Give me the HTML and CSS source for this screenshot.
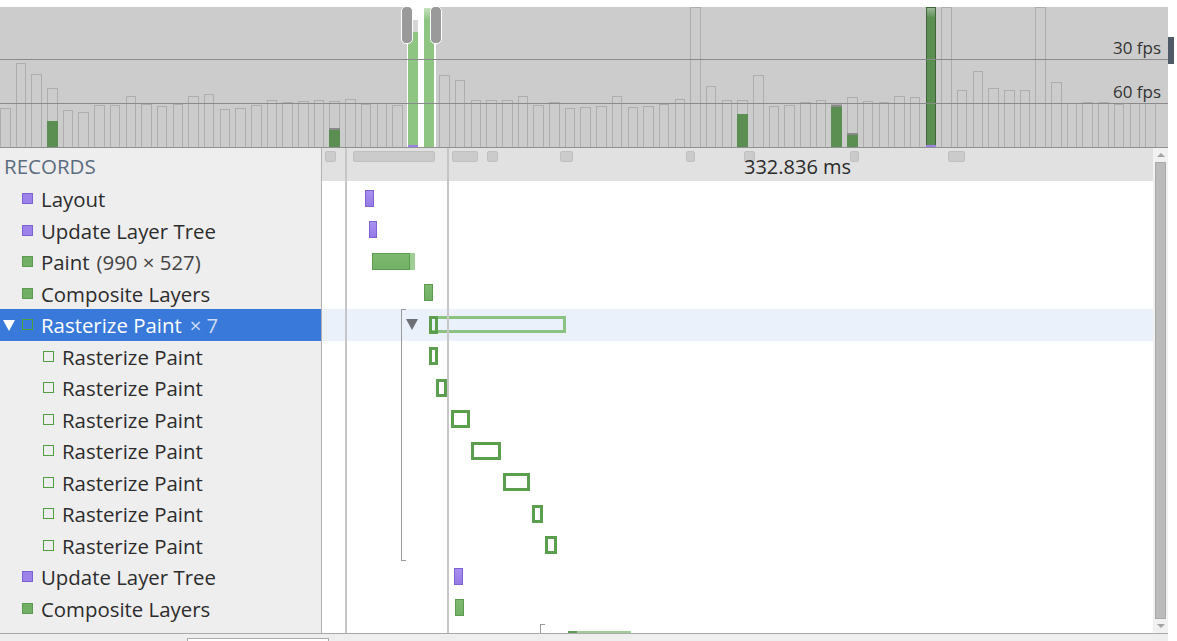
FILE: index.html
```html
<!DOCTYPE html>
<html>
<head>
<meta charset="utf-8">
<link rel="stylesheet" href="styles.css">
</head>
<body>
<div class="app">
  <section class="overview">
    <div class="window"></div>
    <div class="bars">
      <div class="bar" style="height:39px"></div>
      <div class="bar" style="height:84px"></div>
      <div class="bar" style="height:73px"></div>
      <div class="bar" style="height:59px"><div class="fill" style="height:26px"></div></div>
      <div class="bar" style="height:37px"></div>
      <div class="bar" style="height:35px"></div>
      <div class="bar" style="height:42px"></div>
      <div class="bar" style="height:42px"></div>
      <div class="bar" style="height:51px"></div>
      <div class="bar" style="height:43px"></div>
      <div class="bar" style="height:41px"></div>
      <div class="bar" style="height:43px"></div>
      <div class="bar" style="height:51px"></div>
      <div class="bar" style="height:53px"></div>
      <div class="bar" style="height:38px"></div>
      <div class="bar" style="height:39px"></div>
      <div class="bar" style="height:42px"></div>
      <div class="bar" style="height:47px"></div>
      <div class="bar" style="height:45px"></div>
      <div class="bar" style="height:46px"></div>
      <div class="bar" style="height:47px"></div>
      <div class="bar" style="height:46px"><div class="fill cap" style="height:19px"></div></div>
      <div class="bar" style="height:48px"></div>
      <div class="bar" style="height:43px"></div>
      <div class="bar" style="height:44px"></div>
      <div class="bar" style="height:42px"></div>
      <div class="bar sel" style="height:128px"><div class="lcap" style="height:12px"></div><div class="lfill" style="height:114px"></div><div class="purp"></div></div>
      <div class="bar sel" style="height:140px"><div class="lfill fade" style="height:140px"></div></div>
      <div class="bar" style="height:72px"></div>
      <div class="bar" style="height:67px"></div>
      <div class="bar" style="height:47px"></div>
      <div class="bar" style="height:47px"></div>
      <div class="bar" style="height:47px"></div>
      <div class="bar" style="height:51px"></div>
      <div class="bar" style="height:42px"></div>
      <div class="bar" style="height:45px"></div>
      <div class="bar" style="height:39px"></div>
      <div class="bar" style="height:40px"></div>
      <div class="bar" style="height:41px"></div>
      <div class="bar" style="height:51px"></div>
      <div class="bar" style="height:40px"></div>
      <div class="bar" style="height:41px"></div>
      <div class="bar" style="height:43px"></div>
      <div class="bar" style="height:48px"></div>
      <div class="bar" style="height:140px"></div>
      <div class="bar" style="height:61px"></div>
      <div class="bar" style="height:47px"></div>
      <div class="bar" style="height:47px"><div class="fill" style="height:33px"></div></div>
      <div class="bar" style="height:72px"></div>
      <div class="bar" style="height:41px"></div>
      <div class="bar" style="height:42px"></div>
      <div class="bar" style="height:45px"></div>
      <div class="bar" style="height:47px"></div>
      <div class="bar" style="height:43px"><div class="fill cap" style="height:42px"></div></div>
      <div class="bar" style="height:50px"><div class="fill cap" style="height:14px"></div></div>
      <div class="bar" style="height:46px"></div>
      <div class="bar" style="height:45px"></div>
      <div class="bar" style="height:51px"></div>
      <div class="bar" style="height:50px"></div>
      <div class="bar heavy" style="height:140px"><div class="fill fade-dark" style="height:138px"></div><div class="purp"></div></div>
      <div class="bar" style="height:140px"></div>
      <div class="bar" style="height:57px"></div>
      <div class="bar" style="height:76px"></div>
      <div class="bar" style="height:59px"></div>
      <div class="bar" style="height:57px"></div>
      <div class="bar" style="height:57px"></div>
      <div class="bar" style="height:140px"></div>
      <div class="bar" style="height:65px"></div>
      <div class="bar" style="height:44px"></div>
      <div class="bar" style="height:45px"></div>
      <div class="bar" style="height:45px"></div>
      <div class="bar" style="height:43px"></div>
      <div class="bar" style="height:44px"></div>
      <div class="bar" style="height:44px"></div>
    </div>
    <div class="fps-line l30"></div>
    <div class="fps-line l60"></div>
    <span class="fps-label t30">30 fps</span>
    <span class="fps-label t60">60 fps</span>
    <div class="handle h1"></div>
    <div class="handle h2"></div>
  </section>

  <div class="main">
    <aside class="sidebar">
      <div class="sidebar-header">RECORDS</div>
      <div class="row"><span class="icon purple"></span>Layout</div>
      <div class="row"><span class="icon purple"></span>Update Layer Tree</div>
      <div class="row"><span class="icon green"></span>Paint<span class="details">(990 × 527)</span></div>
      <div class="row"><span class="icon green"></span>Composite Layers</div>
      <div class="row selected"><span class="toggle open"></span><span class="icon hollow"></span>Rasterize Paint<span class="count">× 7</span></div>
      <div class="row child"><span class="icon hollow"></span>Rasterize Paint</div>
      <div class="row child"><span class="icon hollow"></span>Rasterize Paint</div>
      <div class="row child"><span class="icon hollow"></span>Rasterize Paint</div>
      <div class="row child"><span class="icon hollow"></span>Rasterize Paint</div>
      <div class="row child"><span class="icon hollow"></span>Rasterize Paint</div>
      <div class="row child"><span class="icon hollow"></span>Rasterize Paint</div>
      <div class="row child"><span class="icon hollow"></span>Rasterize Paint</div>
      <div class="row"><span class="icon purple"></span>Update Layer Tree</div>
      <div class="row"><span class="icon green"></span>Composite Layers</div>
      <div class="row"><span class="toggle closed"></span><span class="icon green"></span>Rasterize Paint<span class="count dim">× 8</span></div>
    </aside>

    <div class="timeline">
      <div class="dividers">
        <span class="marker" style="left:3px;width:11px"></span>
        <span class="marker" style="left:31px;width:82px"></span>
        <span class="marker" style="left:130px;width:26px"></span>
        <span class="marker" style="left:165px;width:11px"></span>
        <span class="marker" style="left:238px;width:13px"></span>
        <span class="marker" style="left:364px;width:9px"></span>
        <span class="marker" style="left:422px;width:11px"></span>
        <span class="marker" style="left:528px;width:9px"></span>
        <span class="marker" style="left:626px;width:17px"></span>
        <span class="divider-label" style="left:422px">332.836 ms</span>
      </div>
      <div class="rows">
        <div class="trow"><span class="tbar purple" style="left:43px;width:9px"></span></div>
        <div class="trow"><span class="tbar purple" style="left:47px;width:8px"></span></div>
        <div class="trow"><span class="tbar green" style="left:50px;width:38px"></span><span class="tbar light" style="left:88px;width:5px"></span></div>
        <div class="trow"><span class="tbar green" style="left:102px;width:9px"></span></div>
        <div class="trow selected"><span class="ttri"></span><span class="tbar agg" style="left:107px;width:137px"></span><span class="tbar hollow" style="left:107px;width:9px"></span></div>
        <div class="trow"><span class="tbar hollow" style="left:107px;width:9px"></span></div>
        <div class="trow"><span class="tbar hollow" style="left:114px;width:11px"></span></div>
        <div class="trow"><span class="tbar hollow" style="left:129px;width:19px"></span></div>
        <div class="trow"><span class="tbar hollow" style="left:149px;width:30px"></span></div>
        <div class="trow"><span class="tbar hollow" style="left:181px;width:27px"></span></div>
        <div class="trow"><span class="tbar hollow" style="left:210px;width:11px"></span></div>
        <div class="trow"><span class="tbar hollow" style="left:223px;width:12px"></span></div>
        <div class="trow"><span class="tbar purple" style="left:132px;width:9px"></span></div>
        <div class="trow"><span class="tbar green" style="left:133px;width:9px"></span></div>
        <div class="trow"><span class="tbar green flat" style="left:246px;width:9px"></span><span class="tbar light" style="left:255px;width:54px"></span></div>
        <div class="bracket b1"></div>
        <div class="bracket b2"></div>
      </div>
      <div class="gridline g1"></div>
      <div class="gridline g2"></div>
    </div>

    <div class="scrollbar">
      <span class="arrow up"></span>
      <span class="thumb"></span>
      <span class="arrow down"></span>
    </div>
  </div>

  <div class="statusbar"><div class="filter-box"></div></div>
</div>
<div class="side-tab"></div>
</body>
</html>
```

FILE: styles.css
```css
html, body {
  margin: 0;
  height: 100%;
  overflow: hidden;
  background: #fff;
}
body {
  display: flex;
  align-items: flex-start;
  font-family: "Open Sans", "Noto Sans", sans-serif;
  color: #2c2c2c;
}
.app {
  width: 1168px;
  margin-top: 7px;
  display: flex;
  flex-direction: column;
  flex: none;
}
.side-tab {
  width: 6px;
  height: 27px;
  margin-top: 37px;
  background: #4f5a66;
}

/* ---------- overview ---------- */
.overview {
  position: relative;
  height: 140px;
  background: #cccccc;
  border-bottom: 1px solid #909090;
  overflow: hidden;
}
.window {
  position: absolute;
  left: 406.5px;
  width: 29px;
  top: 0;
  bottom: 0;
  background: #fff;
}
.bars {
  position: relative;
  display: flex;
  align-items: flex-end;
  gap: 5.2px;
  height: 100%;
}
.bar {
  flex: none;
  width: 10.5px;
  box-sizing: border-box;
  border: 1px solid rgba(0, 0, 0, 0.15);
  border-bottom: none;
  display: flex;
  flex-direction: column;
  justify-content: flex-end;
}
.bar.sel {
  border-color: transparent;
}
.bar.heavy {
  border-color: #3f6538;
}
.fill {
  margin: 0 -1px;
  background: #5b8e51;
  box-sizing: border-box;
}
.fill.cap {
  border-top: 2px solid #8a8a8a;
}
.fill.fade-dark {
  margin: 0;
  background: linear-gradient(#9bb596, #5b8e51 10px);
}
.lcap {
  margin: 0 -1px;
  background: #d6d6d6;
}
.lfill {
  margin: 0 -1px;
  background: #8ec583;
}
.lfill.fade {
  background: linear-gradient(#c7e3c0, #8ec583 12px);
}
.purp {
  height: 2px;
  margin: 0 -1px;
  background: #9b81e8;
}
.fps-line {
  position: absolute;
  left: 0;
  right: 0;
  height: 1px;
  background: #8a8a8a;
}
.l30 { top: 52px; }
.l60 { top: 96px; }
.fps-label {
  position: absolute;
  right: 7px;
  font-size: 17px;
  line-height: 20px;
  color: #333;
}
.t30 { top: 31px; }
.t60 { top: 75px; }
.handle {
  position: absolute;
  top: -1px;
  width: 10px;
  height: 36px;
  background: #9a9a9a;
  border: 1px solid #fff;
  border-radius: 5px;
}
.h1 { left: 400.5px; }
.h2 { left: 430px; }

/* ---------- main ---------- */
.main {
  display: flex;
  height: 485px;
}
.sidebar {
  flex: none;
  width: 321px;
  border-right: 1px solid #b2b2b2;
  background: #eeeeee;
  overflow: hidden;
}
.sidebar-header {
  height: 35px;
  line-height: 36px;
  padding-left: 4px;
  font-size: 20.5px;
  color: #5b6c7f;
}
.row {
  height: 31px;
  display: flex;
  align-items: center;
  padding-left: 22px;
  font-size: 20.4px;
  white-space: nowrap;
}
.row:nth-child(even) {
  height: 32px;
}
.row.child {
  padding-left: 43px;
}
.row.selected {
  background: #3879d9;
  color: #fff;
}
.icon {
  flex: none;
  align-self: flex-start;
  width: 11px;
  height: 11px;
  box-sizing: border-box;
  margin-top: 10px;
  margin-right: 8px;
}
.icon.purple {
  background: #9d83e9;
  border: 1px solid #7c61d2;
}
.icon.green {
  background: #71b064;
  border: 1px solid #5a9a4e;
}
.icon.hollow {
  border: 1px solid #4f9e40;
}
.toggle {
  flex: none;
  width: 0;
  height: 0;
  margin-left: -19px;
  margin-right: 7px;
}
.toggle.open {
  border-left: 6px solid transparent;
  border-right: 6px solid transparent;
  border-top: 11px solid #fff;
}
.toggle.closed {
  border-top: 6px solid transparent;
  border-bottom: 6px solid transparent;
  border-left: 10px solid #777;
  margin-right: 9px;
}
.details {
  margin-left: 7px;
  color: #444;
}
.count {
  margin-left: 8px;
  color: #cddcf4;
}
.count.dim {
  color: #666;
}

/* ---------- timeline ---------- */
.timeline {
  position: relative;
  flex: 1;
  overflow: hidden;
  background: #fff;
}
.dividers {
  position: relative;
  height: 33px;
  background: #e1e1e1;
}
.marker {
  position: absolute;
  top: 3px;
  height: 11px;
  box-sizing: border-box;
  background: #cbcbcb;
  border: 1px solid #c0c0c0;
  border-radius: 2px;
}
.divider-label {
  position: absolute;
  top: 2px;
  font-size: 20px;
  line-height: 33px;
  color: #2b2b2b;
  white-space: nowrap;
}
.rows {
  position: relative;
  margin-top: 2px;
}
.trow {
  position: relative;
  height: 31px;
}
.trow:nth-child(odd) {
  height: 32px;
}
.trow.selected {
  background: #eaf1fb;
}
.tbar {
  position: absolute;
  top: 6px;
  height: 17px;
  box-sizing: border-box;
}
.trow:nth-child(odd) .tbar {
  top: 7px;
}
.tbar.purple {
  background: linear-gradient(#a890f0, #957ae4);
  border: 1px solid #7d60d4;
}
.tbar.green {
  background: linear-gradient(#7dba70, #72b065);
  border: 1px solid #5a9b4d;
}
.tbar.green.flat {
  border: none;
  background: #5e9e52;
}
.tbar.light {
  background: #9fcf95;
}
.tbar.hollow {
  height: 18px;
  border: 3px solid #5b9f4e;
}
.tbar.agg {
  border: 3px solid #8cc283;
}
.ttri {
  position: absolute;
  left: 84px;
  top: 10px;
  width: 0;
  height: 0;
  border-left: 6.5px solid transparent;
  border-right: 6.5px solid transparent;
  border-top: 11px solid #6e7075;
}
.bracket {
  position: absolute;
  width: 5px;
  box-sizing: border-box;
  border: 1px solid #9a9a9a;
  border-right: none;
}
.b1 {
  left: 79px;
  top: 126px;
  height: 252px;
}
.b2 {
  left: 218px;
  top: 441px;
  height: 40px;
  border-bottom: none;
}
.gridline {
  position: absolute;
  top: 0;
  bottom: 0;
  width: 2px;
  background: #c6c6c6;
}
.g1 { left: 23px; }
.g2 { left: 125px; }

/* ---------- scrollbar ---------- */
.scrollbar {
  flex: none;
  width: 15px;
  background: #f1f1f1;
  display: flex;
  flex-direction: column;
  align-items: center;
}
.arrow {
  flex: none;
  width: 0;
  height: 0;
  border-left: 4px solid transparent;
  border-right: 4px solid transparent;
}
.arrow.up {
  margin: 5px 0 5px;
  border-bottom: 4px solid #a3a3a3;
}
.arrow.down {
  margin: 5px 0 5px;
  border-top: 4px solid #a3a3a3;
}
.thumb {
  flex: 1;
  width: 11px;
  box-sizing: border-box;
  background: #bbbbbb;
  border: 1px solid #a9a9a9;
}

/* ---------- status bar ---------- */
.statusbar {
  height: 7px;
  border-top: 1px solid #a9a9a9;
  background: #eeeeee;
  overflow: hidden;
  padding: 4px 0 0 187px;
  box-sizing: content-box;
}
.filter-box {
  width: 142px;
  height: 20px;
  box-sizing: border-box;
  background: #fff;
  border: 1px solid #aaaaaa;
}
```
